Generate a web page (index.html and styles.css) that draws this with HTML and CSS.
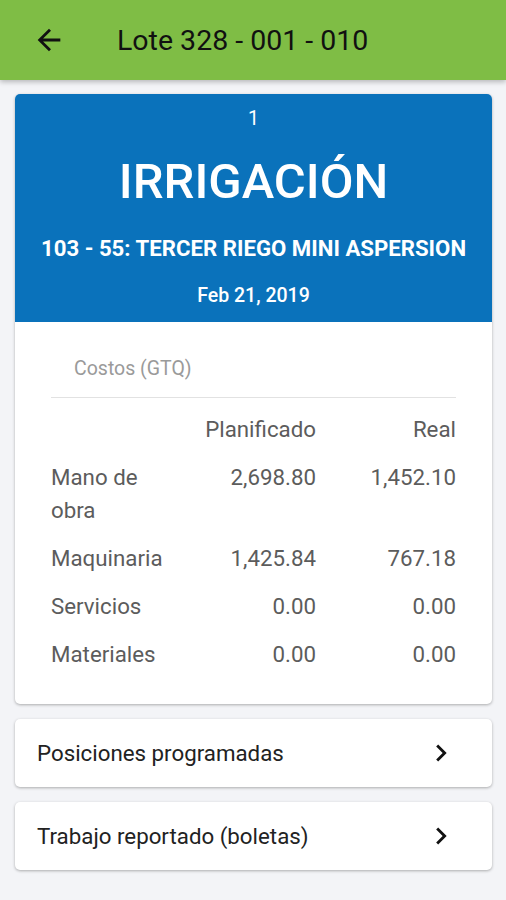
FILE: index.html
```html
<!DOCTYPE html>
<html lang="es">
<head>
  <meta charset="UTF-8">
  <title>Lote 328 - 001 - 010</title>
  <meta name="viewport" content="width=device-width, initial-scale=1.0">
  <link rel="stylesheet" href="styles.css">
</head>
<body>
  <div class="topbar">
    <svg class="back" viewBox="0 0 24 24" width="34" height="34">
      <path d="M20 11H7.83l5.59-5.59L12 4l-8 8 8 8 1.41-1.41L7.83 13H20v-2z" fill="#111"/>
    </svg>
    <h1>Lote 328 - 001 - 010</h1>
  </div>

  <div class="content">
    <div class="card">
      <div class="card-head">
        <div class="num">1</div>
        <div class="type">IRRIGACIÓN</div>
        <div class="task">103 - 55: TERCER RIEGO MINI ASPERSION</div>
        <div class="date">Feb 21, 2019</div>
      </div>
      <div class="card-body">
        <div class="costs-title">Costos (GTQ)</div>
        <div class="costs">
          <div></div>
          <div class="num-col">Planificado</div>
          <div class="num-col">Real</div>

          <div>Mano de obra</div>
          <div class="num-col">2,698.80</div>
          <div class="num-col">1,452.10</div>

          <div>Maquinaria</div>
          <div class="num-col">1,425.84</div>
          <div class="num-col">767.18</div>

          <div>Servicios</div>
          <div class="num-col">0.00</div>
          <div class="num-col">0.00</div>

          <div>Materiales</div>
          <div class="num-col">0.00</div>
          <div class="num-col">0.00</div>
        </div>
      </div>
    </div>

    <div class="card link-row">
      <span>Posiciones programadas</span>
      <svg class="chev" viewBox="0 0 24 24" width="34" height="34">
        <path d="M10 6L8.59 7.41 13.17 12l-4.58 4.59L10 18l6-6z" fill="#111"/>
      </svg>
    </div>

    <div class="card link-row">
      <span>Trabajo reportado (boletas)</span>
      <svg class="chev" viewBox="0 0 24 24" width="34" height="34">
        <path d="M10 6L8.59 7.41 13.17 12l-4.58 4.59L10 18l6-6z" fill="#111"/>
      </svg>
    </div>
  </div>
</body>
</html>
```

FILE: styles.css
```css
* { box-sizing: border-box; }

body {
  margin: 0;
  background-color: #f3f4f7;
  font-family: Roboto, 'Noto Sans', sans-serif;
  color: #222;
}

.topbar {
  height: 80px;
  background-color: #7fbd45;
  display: flex;
  align-items: center;
  padding-left: 32px;
  box-shadow: 0 2px 5px rgba(0, 0, 0, 0.25);
  position: relative;
  z-index: 2;
}

.topbar h1 {
  margin: 0 0 0 51px;
  font-size: 28.5px;
  font-weight: 400;
  color: #111;
}

.content {
  padding: 14px 14px 20px 15px;
  display: flex;
  flex-direction: column;
  gap: 15px;
}

.card {
  background-color: white;
  border-radius: 5px;
  box-shadow: 0 1px 3px rgba(0, 0, 0, 0.3);
  overflow: hidden;
}

.card-head {
  background-color: #0a72bb;
  color: white;
  text-align: center;
  padding: 13px 10px 15px;
}

.num {
  font-size: 19.5px;
  line-height: 23px;
}

.type {
  font-size: 49px;
  font-weight: 500;
  margin-top: 20px;
  line-height: 64px;
}

.task {
  font-size: 22.2px;
  font-weight: 700;
  line-height: 26px;
  margin-top: 21px;
}

.date {
  font-size: 19.5px;
  font-weight: 500;
  line-height: 23px;
  margin-top: 23px;
}

.card-body {
  padding: 35px 36px 33px 36px;
}

.costs-title {
  font-size: 19.5px;
  line-height: 23px;
  color: #9a9a9a;
  padding: 0 0 17px 23px;
  border-bottom: 1px solid #e2e2e2;
}

.costs {
  display: grid;
  grid-template-columns: 120px 145px 140px;
  row-gap: 15px;
  padding-top: 15px;
  font-size: 22.3px;
  line-height: 33px;
  color: #5c5c5c;
}

.num-col {
  text-align: right;
}

.link-row {
  height: 68px;
  display: flex;
  align-items: center;
  justify-content: space-between;
  padding: 0 34px 0 22px;
  font-size: 22.3px;
  color: #222;
}
```
